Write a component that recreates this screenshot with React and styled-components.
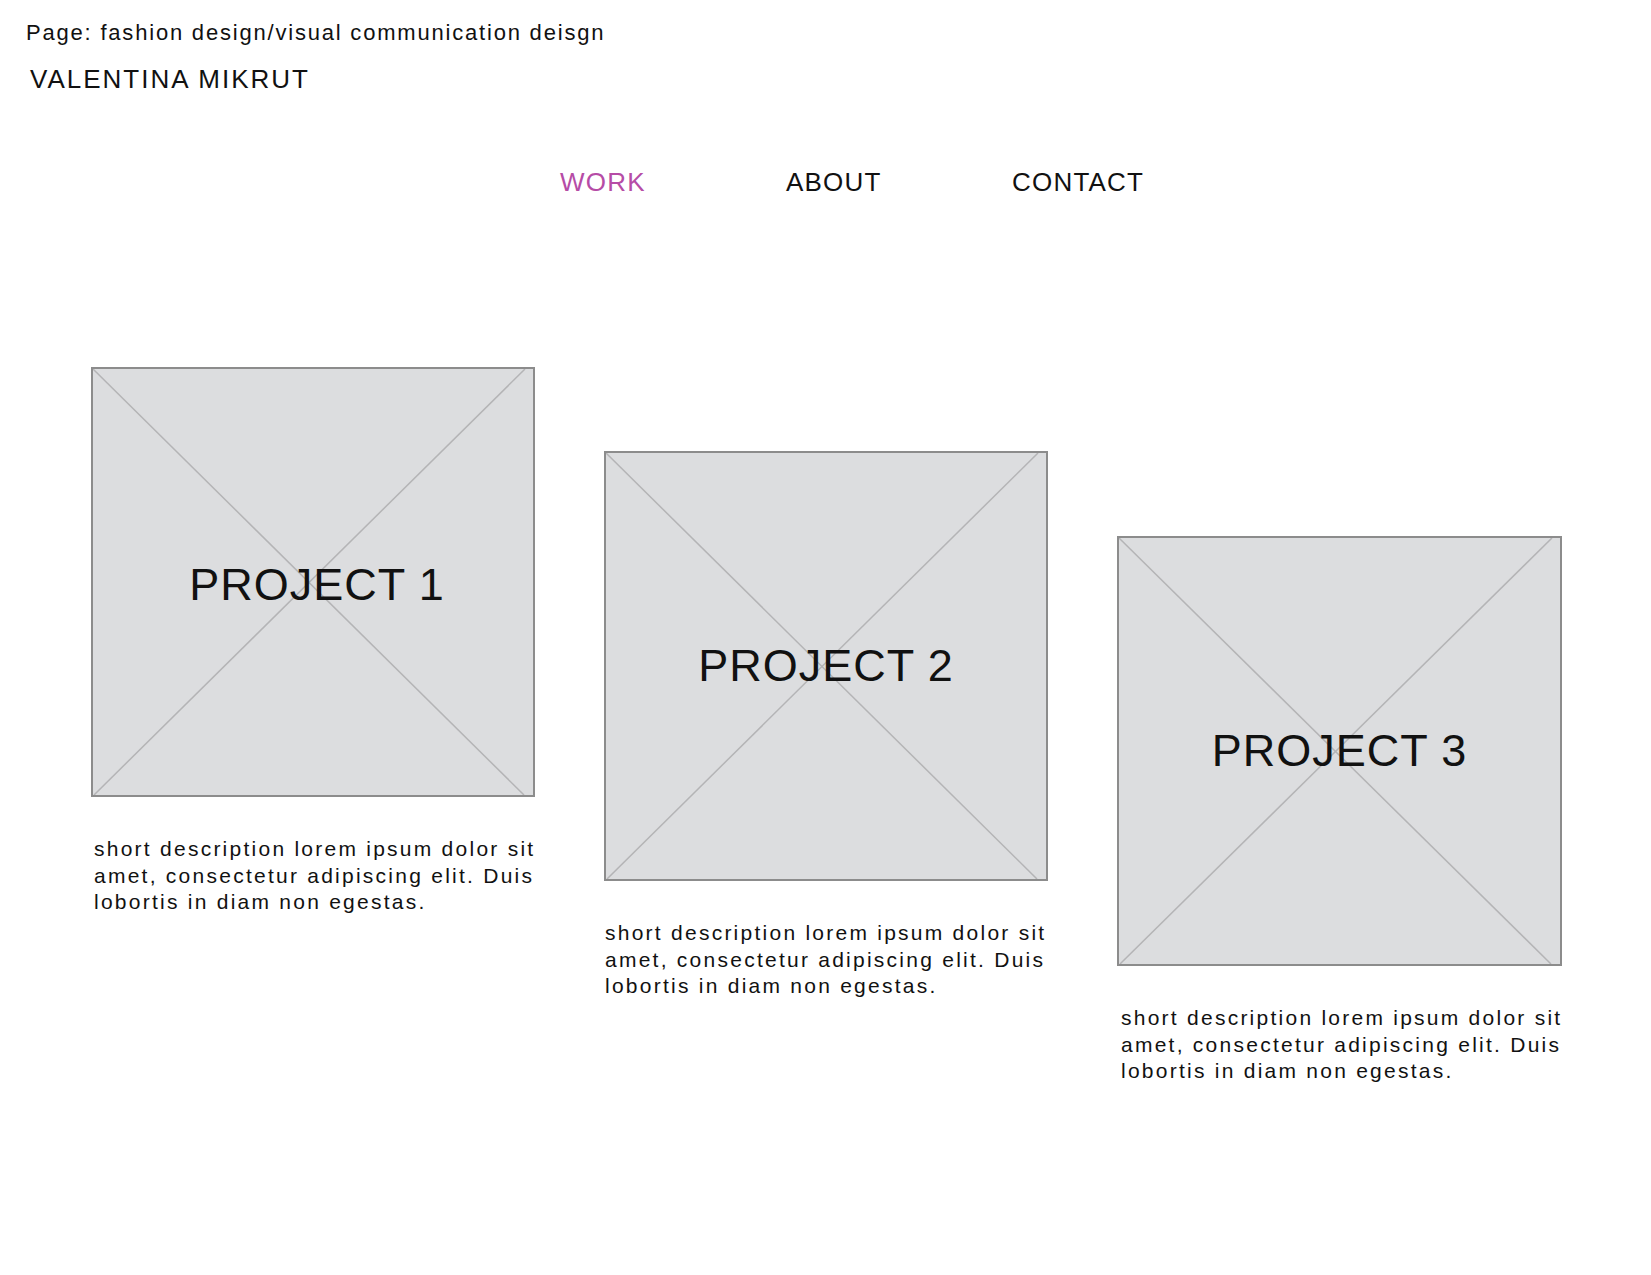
import React from "react";
import styled, { createGlobalStyle } from "styled-components";

const Global = createGlobalStyle`
  html, body { margin: 0; padding: 0; background: #ffffff; }
  body { font-family: "Liberation Sans", Arial, sans-serif; color: #111111; }
`;

const Page = styled.div`
  width: 1651px;
  min-height: 1275px;
  display: flex;
  flex-direction: column;
`;

const Header = styled.header`
  display: flex;
  flex-direction: column;
  padding: 20px 0 0 26px;
`;

const PageLabel = styled.div`
  font-size: 22px;
  line-height: 26px;
  letter-spacing: 1.8px;
`;

const Brand = styled.div`
  margin: 18px 0 0 4px;
  font-size: 26px;
  line-height: 30px;
  letter-spacing: 2px;
`;

const Nav = styled.nav`
  display: grid;
  grid-template-columns: repeat(3, 226px);
  margin: 73px 0 0 560px;
`;

const NavItem = styled.a`
  font-size: 26px;
  line-height: 30px;
  letter-spacing: 1.2px;
  color: ${(p) => (p.$active ? "#b64ca6" : "#111111")};
  text-decoration: none;
`;

const Cards = styled.section`
  display: flex;
  align-items: flex-start;
  gap: 69px;
  margin: 170px 0 0 91px;
`;

const Card = styled.article`
  width: ${(p) => p.$width}px;
  display: flex;
  flex-direction: column;
  margin-top: ${(p) => p.$offset}px;
`;

const Frame = styled.div`
  position: relative;
  height: 430px;
  box-sizing: border-box;
  border: 2px solid #8c8c8c;
  background: #dcdddf;
  display: flex;
  align-items: center;
  justify-content: center;
`;

const Cross = styled.svg`
  position: absolute;
  inset: 0;
  width: 100%;
  height: 100%;
`;

const Title = styled.h2`
  position: relative;
  margin: ${(p) => (p.$shift ? `6px 0 0 ${p.$shift}px` : "0")};
  font-weight: 400;
  font-size: 45px;
  line-height: 50px;
  letter-spacing: 1px;
  color: #111111;
`;

const Description = styled.p`
  margin: 39px 0 0 ${(p) => p.$indent}px;
  width: 460px;
  font-size: 21px;
  line-height: 26.5px;
  letter-spacing: 2.25px;
  color: #111111;
`;

const projects = [
  { title: "PROJECT 1", offset: 0, width: 444, shift: 8, indent: 3 },
  { title: "PROJECT 2", offset: 84, width: 444, shift: 0, indent: 1 },
  { title: "PROJECT 3", offset: 169, width: 445, shift: 0, indent: 4 },
];

const desc =
  "short description lorem ipsum dolor sit amet, consectetur adipiscing elit. Duis lobortis in diam non egestas.";

export default function App() {
  return (
    <Page>
      <Global />
      <Header>
        <PageLabel>Page: fashion design/visual communication deisgn</PageLabel>
        <Brand>VALENTINA MIKRUT</Brand>
      </Header>
      <Nav>
        <NavItem $active>WORK</NavItem>
        <NavItem>ABOUT</NavItem>
        <NavItem>CONTACT</NavItem>
      </Nav>
      <Cards>
        {projects.map((p) => (
          <Card key={p.title} $offset={p.offset} $width={p.width}>
            <Frame>
              <Cross viewBox="0 0 440 426" preserveAspectRatio="none">
                <line x1="0" y1="0" x2="431" y2="426" stroke="#b4b4b6" strokeWidth="1.5" />
                <line x1="1" y1="426" x2="432" y2="0" stroke="#b4b4b6" strokeWidth="1.5" />
              </Cross>
              <Title $shift={p.shift}>{p.title}</Title>
            </Frame>
            <Description $indent={p.indent}>{desc}</Description>
          </Card>
        ))}
      </Cards>
    </Page>
  );
}
